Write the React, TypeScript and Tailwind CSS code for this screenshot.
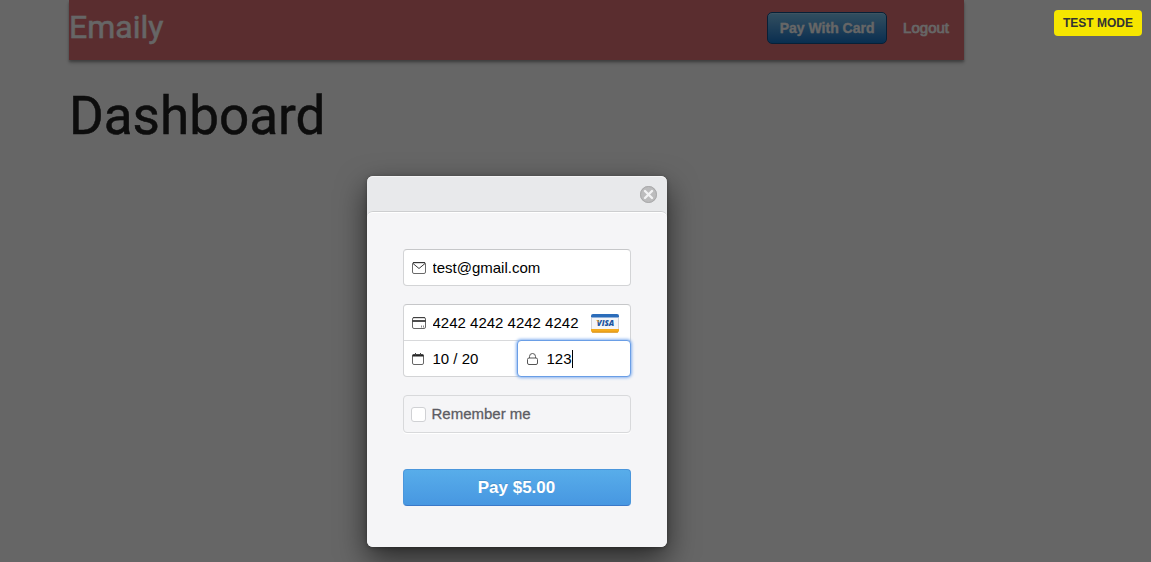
import { useState } from "react";

function MailIcon() {
  return (
    <svg className="h-3 w-4 shrink-0" viewBox="0 0 16 12" fill="none">
      <rect x="0.5" y="0.5" width="13" height="11" rx="1.5" stroke="#6a6a6a" />
      <path d="M1 0.700h12M1 1.500 7 6.500 13 1.500" stroke="#222" strokeWidth="0.900" />
    </svg>
  );
}

function CardIcon() {
  return (
    <svg className="h-3 w-4 shrink-0" viewBox="0 0 16 12" fill="none">
      <rect x="0.5" y="0.5" width="13" height="11" rx="1.5" stroke="#666" />
      <path d="M1 0.700h12" stroke="#333" strokeWidth="0.900" />
      <path d="M0.500 4h13" stroke="#222" strokeWidth="1.600" />
      <path d="M9.500 8.500v2M11.500 8.500v2" stroke="#888" />
    </svg>
  );
}

function CalendarIcon() {
  return (
    <svg className="h-3 w-4 shrink-0" viewBox="0 0 16 12" fill="none">
      <rect x="0.5" y="1.5" width="11" height="10" rx="1.5" stroke="#666" />
      <path d="M0.500 2.500h11" stroke="#222" strokeWidth="2" />
      <path d="M3.500 0v2.500M8.500 0v2.500" stroke="#444" />
    </svg>
  );
}

function LockIcon() {
  return (
    <svg className="h-3 w-4 shrink-0" viewBox="0 0 16 12" fill="none" stroke="#555">
      <rect x="1.5" y="5" width="10" height="6.5" rx="1.5" />
      <path d="M3.500 5V3.500a3 3 0 0 1 6 0V5" />
    </svg>
  );
}

function VisaIcon() {
  return (
    <svg className="h-5 w-[30px] shrink-0" viewBox="0 0 30 20" aria-label="Visa">
      <rect x="1" y="1" width="28" height="18" rx="2" fill="#f4f5f8" />
      <path d="M1 4.500V3a2 2 0 0 1 2-2h24a2 2 0 0 1 2 2v1.500Z" fill="#2a6cba" />
      <path d="M1 16v1.500a2 2 0 0 0 2 2h24a2 2 0 0 0 2-2V16Z" fill="#f5ab1e" />
      <path d="M2 19.200h26" stroke="#cf860c" strokeWidth="0.800" />
      <path d="M1.500 4.500V16M28.500 4.500V16" stroke="#cfd3da" />
      <text x="15.500" y="13" textAnchor="middle" fontSize="8" fontWeight="800" fontStyle="italic" fill="#1c55a0" className="font-['Open_Sans',sans-serif]">VISA</text>
      <path d="M6 7.300h2.400l.6 2.200Z" fill="#eda21b" />
    </svg>
  );
}

const inputClass = "min-w-0 flex-1 bg-transparent text-[15px] leading-5 text-black outline-none";

export default function App() {
  const [email, setEmail] = useState("test@gmail.com");
  const [card, setCard] = useState("4242 4242 4242 4242");
  const [expiry, setExpiry] = useState("10 / 20");
  const [cvc, setCvc] = useState("123");
  const [remember, setRemember] = useState(false);

  return (
    <div className="relative min-h-screen overflow-hidden bg-white font-['Liberation_Sans',Arial,sans-serif]">
      <div className="pr-[118px]">
        <div className="mx-auto max-w-[895px]">
          <nav className="flex h-[60px] items-start justify-between bg-[#e17277] pr-[15px] shadow-[0_2px_2px_rgba(0,0,0,0.24),0_3px_4px_rgba(0,0,0,0.2)]">
            <a href="#home" className="pt-2 font-[Roboto,sans-serif] text-[32px] leading-[38px] text-white [-webkit-text-stroke:0.5px_white]">Emaily</a>
            <div className="flex items-center gap-4 pt-3">
              <button type="button" className="h-8 w-[120px] rounded-[5px] border border-[#13508a] bg-linear-to-b from-[#7dc5ee] to-[#1474c8] text-[14px] font-bold text-white shadow-[inset_0_1px_0_rgba(255,255,255,0.25)] [-webkit-text-stroke:0.3px_white]">Pay With Card</button>
              <a href="#logout" className="text-[15px] text-white [-webkit-text-stroke:0.7px_white]">Logout</a>
            </div>
          </nav>
          <h1 className="pt-6 font-[Roboto,sans-serif] text-[53px] leading-[64px] text-[#212121] [-webkit-text-stroke:0.5px_#212121]">Dashboard</h1>
        </div>
      </div>

      <div className="absolute inset-0 bg-black/60 pt-44 pr-[118px]">
        <section role="dialog" aria-label="Payment" className="mx-auto w-[300px] rounded-md bg-[#e8e9eb] shadow-[0_12px_30px_rgba(0,0,0,0.6),0_1px_4px_rgba(0,0,0,0.3)]">
          <header className="flex h-[35px] items-center justify-end rounded-t-md pr-[9px] shadow-[inset_0_1px_0_#f4f4f5]">
            <button type="button" aria-label="Close" className="mt-0.5">
              <svg className="size-[19px]" viewBox="0 0 19 19">
                <circle cx="9.5" cy="9.5" r="8.5" fill="#bcbcbd" />
                <circle cx="9.5" cy="9.5" r="8" fill="none" stroke="#a9a9aa" />
                <path d="m6 6 7 7M13 6l-7 7" stroke="#f2f2f3" strokeWidth="2.4" strokeLinecap="round" />
              </svg>
            </button>
          </header>
          <form className="rounded-md border-t border-[#cdced0] bg-[#f5f5f7] px-9 pt-[37px] pb-[41px] shadow-[inset_0_1px_0_white]" onSubmit={(e) => e.preventDefault()}>
            <label className="flex h-[37px] items-center gap-[5px] rounded border border-[#d3d4d6] border-t-[#c6c7c9] bg-white px-2">
              <MailIcon />
              <input aria-label="Email" type="email" className={inputClass} value={email} onChange={(e) => setEmail(e.target.value)} />
            </label>

            <div className="mt-[18px] rounded border border-[#d3d4d6] border-t-[#c6c7c9] bg-white">
              <label className="flex h-[35px] items-center gap-[5px] pr-[10px] pl-2">
                <CardIcon />
                <input aria-label="Card number" className={inputClass} value={card} onChange={(e) => setCard(e.target.value)} />
                <VisaIcon />
              </label>
              <div className="grid h-9 grid-cols-2 border-t border-[#d8d9db]">
                <label className="flex items-center gap-[5px] pl-2">
                  <CalendarIcon />
                  <input aria-label="Expiry" className={inputClass} value={expiry} onChange={(e) => setExpiry(e.target.value)} />
                </label>
                <label className="-my-px -mr-px flex items-center gap-[5px] rounded border border-[#6a9ee6] bg-white pl-2 shadow-[0_0_3px_1px_#8ab4f0]">
                  <LockIcon />
                  <span className="flex items-center">
                    <input aria-label="CVC" className="w-[25px] bg-transparent text-[15px] leading-5 text-black outline-none" value={cvc} onChange={(e) => setCvc(e.target.value)} />
                    <span className="h-[18px] w-px bg-black" />
                  </span>
                </label>
              </div>
            </div>

            <label className="mt-[18px] flex h-[38px] items-center gap-[6px] rounded border border-[#d8d9db] px-[7px] text-[15px] text-[#5c5c63] shadow-[0_1px_0_white] [-webkit-text-stroke:0.3px_#5c5c63]">
              <input type="checkbox" className="size-[15px] appearance-none rounded-[3px] border border-[#d0d1d4] bg-white checked:bg-[#4a96e0]" checked={remember} onChange={(e) => setRemember(e.target.checked)} />
              Remember me
            </label>

            <button type="submit" className="mt-9 h-[37px] w-full rounded border border-[#4a96dc] border-b-[#3a78c8] bg-linear-to-b from-[#58adea] to-[#4797e1] text-[17px] leading-5 font-bold text-white [text-shadow:0_-1px_0_rgba(0,0,0,0.15)]">Pay $5.00</button>
          </form>
        </section>
      </div>

      <div className="absolute top-[10px] right-[9px] flex h-[26px] w-[88px] items-center justify-center rounded bg-[#f6e600] text-[12px] font-bold text-[#333]">TEST MODE</div>
    </div>
  );
}
